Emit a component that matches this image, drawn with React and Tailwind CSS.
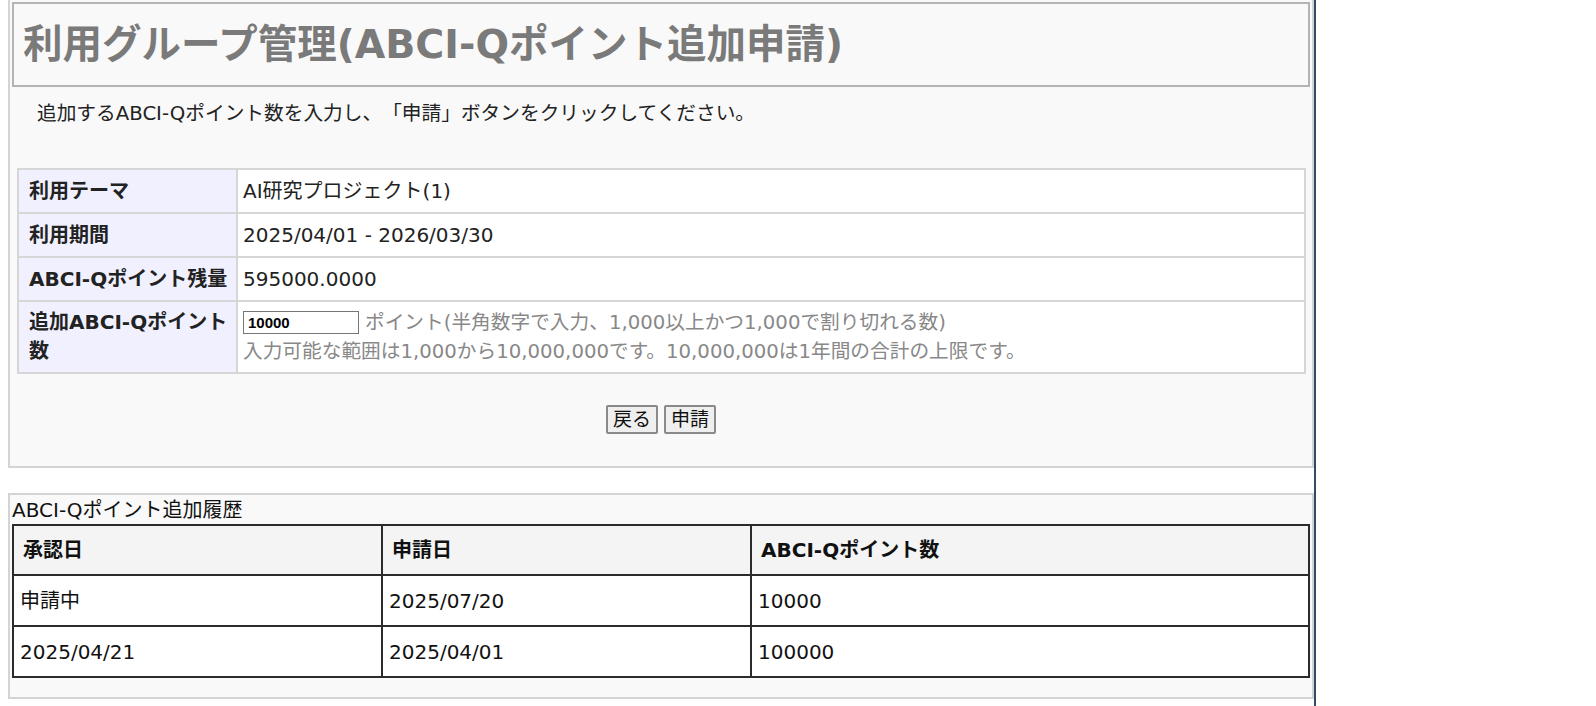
import React from 'react';

const font = { fontFamily: '"DejaVu Sans", "Noto Sans CJK JP", sans-serif' };

const infoRows = [
  { label: '利用テーマ', value: 'AI研究プロジェクト(1)' },
  { label: '利用期間', value: '2025/04/01 - 2026/03/30' },
  { label: 'ABCI-Qポイント残量', value: '595000.0000' },
];

const history = [
  { approved: '申請中', applied: '2025/07/20', points: '10000' },
  { approved: '2025/04/21', applied: '2025/04/01', points: '100000' },
];

const InfoTable = () => (
  <table className="ml-[5px] w-[1289px] border-collapse bg-white text-[20px] leading-[28px] text-[#222]">
    <colgroup>
      <col className="w-[219px]" />
      <col />
    </colgroup>
    <tbody>
      {infoRows.map(row => (
        <tr key={row.label}>
          <th className="border-2 border-[#d6d6d6] bg-[#f0f0ff] pl-[10px] pr-1 py-[7px] text-left align-top font-bold">
            {row.label}
          </th>
          <td className="border-2 border-[#d6d6d6] pl-[5px] py-[7px]">{row.value}</td>
        </tr>
      ))}
      <tr>
        <th className="border-2 border-[#d6d6d6] bg-[#f0f0ff] pl-[10px] pr-1 py-[6px] text-left align-top font-bold leading-[29px]">
          追加ABCI-Qポイント数
        </th>
        <td className="border-2 border-[#d6d6d6] pl-[5px] py-[6px] text-[19.7px] text-[#888] leading-[29px]">
          <div className="flex items-center">
            <input
              type="text"
              defaultValue="10000"
              className="h-[23px] w-[116px] border border-[#767676] bg-white px-[4px] text-[15px] font-bold text-black outline-none"
              style={{ fontFamily: '"Liberation Sans", Arial, sans-serif' }}
            />
            <span className="ml-[6px]">ポイント(半角数字で入力、1,000以上かつ1,000で割り切れる数)</span>
          </div>
          <div>入力可能な範囲は1,000から10,000,000です。10,000,000は1年間の合計の上限です。</div>
        </td>
      </tr>
    </tbody>
  </table>
);

const HistoryTable = () => (
  <table className="ml-[2px] w-[1298px] table-fixed border-collapse bg-white text-[20px] leading-[28px] text-[#111]">
    <colgroup>
      <col className="w-[369px]" />
      <col className="w-[369px]" />
      <col />
    </colgroup>
    <thead>
      <tr className="bg-[#f4f4f4]">
        <th className="border-2 border-[#2b2b2b] px-[9px] py-[10px] text-left font-bold">承認日</th>
        <th className="border-2 border-[#2b2b2b] px-[9px] py-[10px] text-left font-bold">申請日</th>
        <th className="border-2 border-[#2b2b2b] px-[9px] py-[10px] text-left font-bold">ABCI-Qポイント数</th>
      </tr>
    </thead>
    <tbody>
      {history.map(h => (
        <tr key={h.applied}>
          <td className="border-2 border-[#2b2b2b] px-[6px] py-[10.5px]">{h.approved}</td>
          <td className="border-2 border-[#2b2b2b] px-[6px] py-[10.5px]">{h.applied}</td>
          <td className="border-2 border-[#2b2b2b] px-[6px] py-[10.5px]">{h.points}</td>
        </tr>
      ))}
    </tbody>
  </table>
);

const App = () => {
  return (
    <div className="flex min-h-[706px] bg-white [text-spacing-trim:space-all]" style={font}>
      <div className="w-[1314px] shrink-0 pl-[8px]">
        <section className="border-2 border-t-0 border-[#d4d4d4] bg-[#f9f9f9] px-[2px] pt-[2px] pb-[32px]">
          <div className="flex h-[85px] items-center border-2 border-[#b4b4b4] bg-[#f9f9f9] pl-[9px]">
            <h1 className="text-[39.5px] font-bold leading-none text-[#7a7a7a]">
              利用グループ管理(ABCI-Qポイント追加申請)
            </h1>
          </div>

          <p className="mt-[13px] pl-[25px] text-[19.7px] leading-[28px] text-[#222]">
            追加するABCI-Qポイント数を入力し、「申請」ボタンをクリックしてください。
          </p>

          <div className="mt-[40px]">
            <InfoTable />
          </div>

          <div className="mt-[31px] flex justify-center gap-[6px]">
            <button className="h-[29px] rounded-[2px] border-2 border-[#8a8a8a] bg-[#efefef] px-[5px] text-[19px] leading-none text-[#111]">
              戻る
            </button>
            <button className="h-[29px] rounded-[2px] border-2 border-[#8a8a8a] bg-[#efefef] px-[5px] text-[19px] leading-none text-[#111]">
              申請
            </button>
          </div>
        </section>

        <section className="mt-[25px] border-2 border-[#d4d4d4] bg-[#f9f9f9] pt-[1px] pb-[19px]">
          <div className="pl-[2px] text-[20px] leading-[28px] text-[#111]">ABCI-Qポイント追加履歴</div>
          <HistoryTable />
        </section>
      </div>
      <div className="w-[2px] shrink-0 bg-[#2f4b66]" />
      <div className="flex-1 bg-white" />
    </div>
  );
};

export default App;
